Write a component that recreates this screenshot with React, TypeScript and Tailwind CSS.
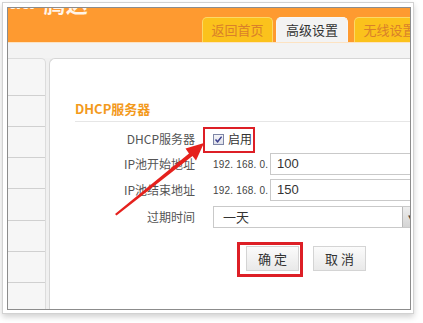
import React from "react";

const cjk = "font-['Noto_Sans_CJK_SC',sans-serif]";
const latin = "font-['Liberation_Sans','Noto_Sans_CJK_SC',sans-serif]";

function Tab({ label, active, w }: { label: string; active?: boolean; w: string }) {
  return (
    <div
      className={`${w} h-[25px] shrink-0 rounded-t-[5px] flex items-center justify-center text-[13px] ${cjk} ${
        active
          ? "bg-[#f3f3f3] text-[#333] border-t border-x border-[#f7f7f7]"
          : "bg-[#fbc21c] text-[#d9802a] border-t border-x border-[#fcd867]"
      }`}
    >
      {label}
    </div>
  );
}

function Row({ label, children, className }: { label: string; children: React.ReactNode; className?: string }) {
  return (
    <div className={`flex items-center ${className ?? ""}`}>
      <div className={`w-[145px] shrink-0 text-right text-[12px] text-[#555] ${cjk}`}>{label}</div>
      <div className="ml-[18px] flex items-center shrink-0">{children}</div>
    </div>
  );
}

export default function App() {
  const sideRows = [37, 31, 31, 31, 32, 31, 31, 31];

  return (
    <div className="w-[423px] h-[323px] bg-white relative overflow-hidden pl-[2px] pt-[2px]">
      {/* photo frame */}
      <div className="w-[412px] h-[312px] border border-[#d2d2d2] bg-white pl-[4px] pt-[4px] shadow-[0_3px_6px_rgba(0,0,0,0.18)]">
        <div className="w-[404px] h-[303px] border border-[#8c8c8c] overflow-hidden flex flex-col bg-[#f0f0f0]">
          {/* orange header */}
          <div className="h-[34px] shrink-0 bg-[#fe9a30] flex flex-col overflow-hidden">
            <div className="h-[7px] overflow-hidden flex text-white/90 font-bold">
              <span className={`-mt-[18px] text-[22px] leading-[24px] ${latin}`}>da</span>
              <span className={`ml-[10px] -mt-[18px] text-[22px] leading-[24px] ${cjk}`}>腾达</span>
            </div>
            <div className="flex ml-[194px] mt-auto">
              <Tab label="返回首页" w="w-[71px]" />
              <div className="w-[3px] shrink-0" />
              <Tab label="高级设置" w="w-[72px]" active />
              <div className="w-[6px] shrink-0" />
              <Tab label="无线设置" w="w-[71px]" />
            </div>
          </div>
          <div className="h-[1px] shrink-0 bg-[#fde3c2]" />
          <div className="h-[15px] shrink-0 bg-[#f3f3f3]" />

          {/* main area */}
          <div className="flex flex-1 min-h-0">
            <div className="w-[38px] shrink-0 bg-[#f6f6f6] border-r border-t border-[#dcdcdc] rounded-tr-[5px] flex flex-col">
              {sideRows.map((h, i) => (
                <div key={i} className="border-b border-[#d0d0d0] shrink-0" style={{ height: h }} />
              ))}
            </div>

            <div className="ml-[3px] flex-1 bg-white border-l border-t border-[#d6d6d6] rounded-tl-[6px] flex flex-col overflow-hidden">
              <div className={`mt-[42px] ml-[25px] h-[16px] leading-[16px] text-[13px] font-bold text-[#f39a1c] ${cjk}`}>
                DHCP服务器
              </div>
              <div className="mt-[4px] ml-[25px] h-[1px] bg-[#e6e6e6]" />

              <Row label="DHCP服务器" className="mt-[4px] h-[26px]">
                <span className="w-[11px] h-[11px] border border-[#7e86a6] bg-gradient-to-b from-[#f4f4f8] to-[#dfe1ea] flex items-center justify-center">
                  <svg width="9" height="9" viewBox="0 0 9 9">
                    <path d="M1.5 4.5 L3.6 6.8 L7.6 1.6" fill="none" stroke="#3b3f8f" strokeWidth="1.5" />
                  </svg>
                </span>
                <span className={`ml-[4px] text-[12px] text-[#333] ${cjk}`}>启用</span>
              </Row>

              <Row label="IP池开始地址" className="mt-[1px] h-[22px]">
                <span className={`w-[57px] whitespace-nowrap text-[10px] tracking-[0.2px] text-[#444] ${latin}`}>192. 168. 0.</span>
                <div className={`w-[150px] h-[22px] border border-[#c9c9c9] flex items-center pl-[6px] text-[13px] text-[#333] ${latin}`}>
                  100
                </div>
              </Row>

              <Row label="IP池结束地址" className="mt-[4px] h-[22px]">
                <span className={`w-[57px] whitespace-nowrap text-[10px] tracking-[0.2px] text-[#444] ${latin}`}>192. 168. 0.</span>
                <div className={`w-[150px] h-[22px] border border-[#c9c9c9] flex items-center pl-[6px] text-[13px] text-[#333] ${latin}`}>
                  150
                </div>
              </Row>

              <Row label="过期时间" className="mt-[5px] h-[22px]">
                <div className="w-[206px] h-[22px] border border-[#c9c9c9] flex items-center">
                  <span className={`pl-[9px] text-[13px] text-[#333] ${cjk}`}>一天</span>
                  <span className="ml-auto w-[16px] h-[20px] bg-gradient-to-b from-[#eeeeee] to-[#d4d4d4] border-l border-[#b8b8b8] flex items-center justify-center text-[8px] text-[#444]">
                    ▼
                  </span>
                </div>
              </Row>

              <div className="mt-[18px] ml-[196px] flex gap-[14px]">
                {["确 定", "取 消"].map((t) => (
                  <div
                    key={t}
                    className={`w-[53px] h-[25px] border border-[#d4d4d4] bg-gradient-to-b from-[#fbfbfb] to-[#e9e9e9] flex items-center justify-center text-[13px] text-[#333] ${cjk}`}
                  >
                    {t}
                  </div>
                ))}
              </div>
            </div>
          </div>
        </div>
      </div>

      {/* annotation overlays */}
      <div className="absolute left-[203px] top-[127px] w-[52px] h-[26px] border-2 border-[#dd1f26]" />
      <div className="absolute left-[237px] top-[242px] w-[66px] h-[35px] border-[3px] border-[#dd1f26]" />
      <svg className="absolute left-0 top-0 pointer-events-none" width="423" height="323" viewBox="0 0 423 323">
        <polygon
          points="115,214 189,153.5 185.5,148.5 204,143 196,160.5 192.5,156 116.5,215.5"
          fill="#e5211d"
        />
      </svg>
    </div>
  );
}
